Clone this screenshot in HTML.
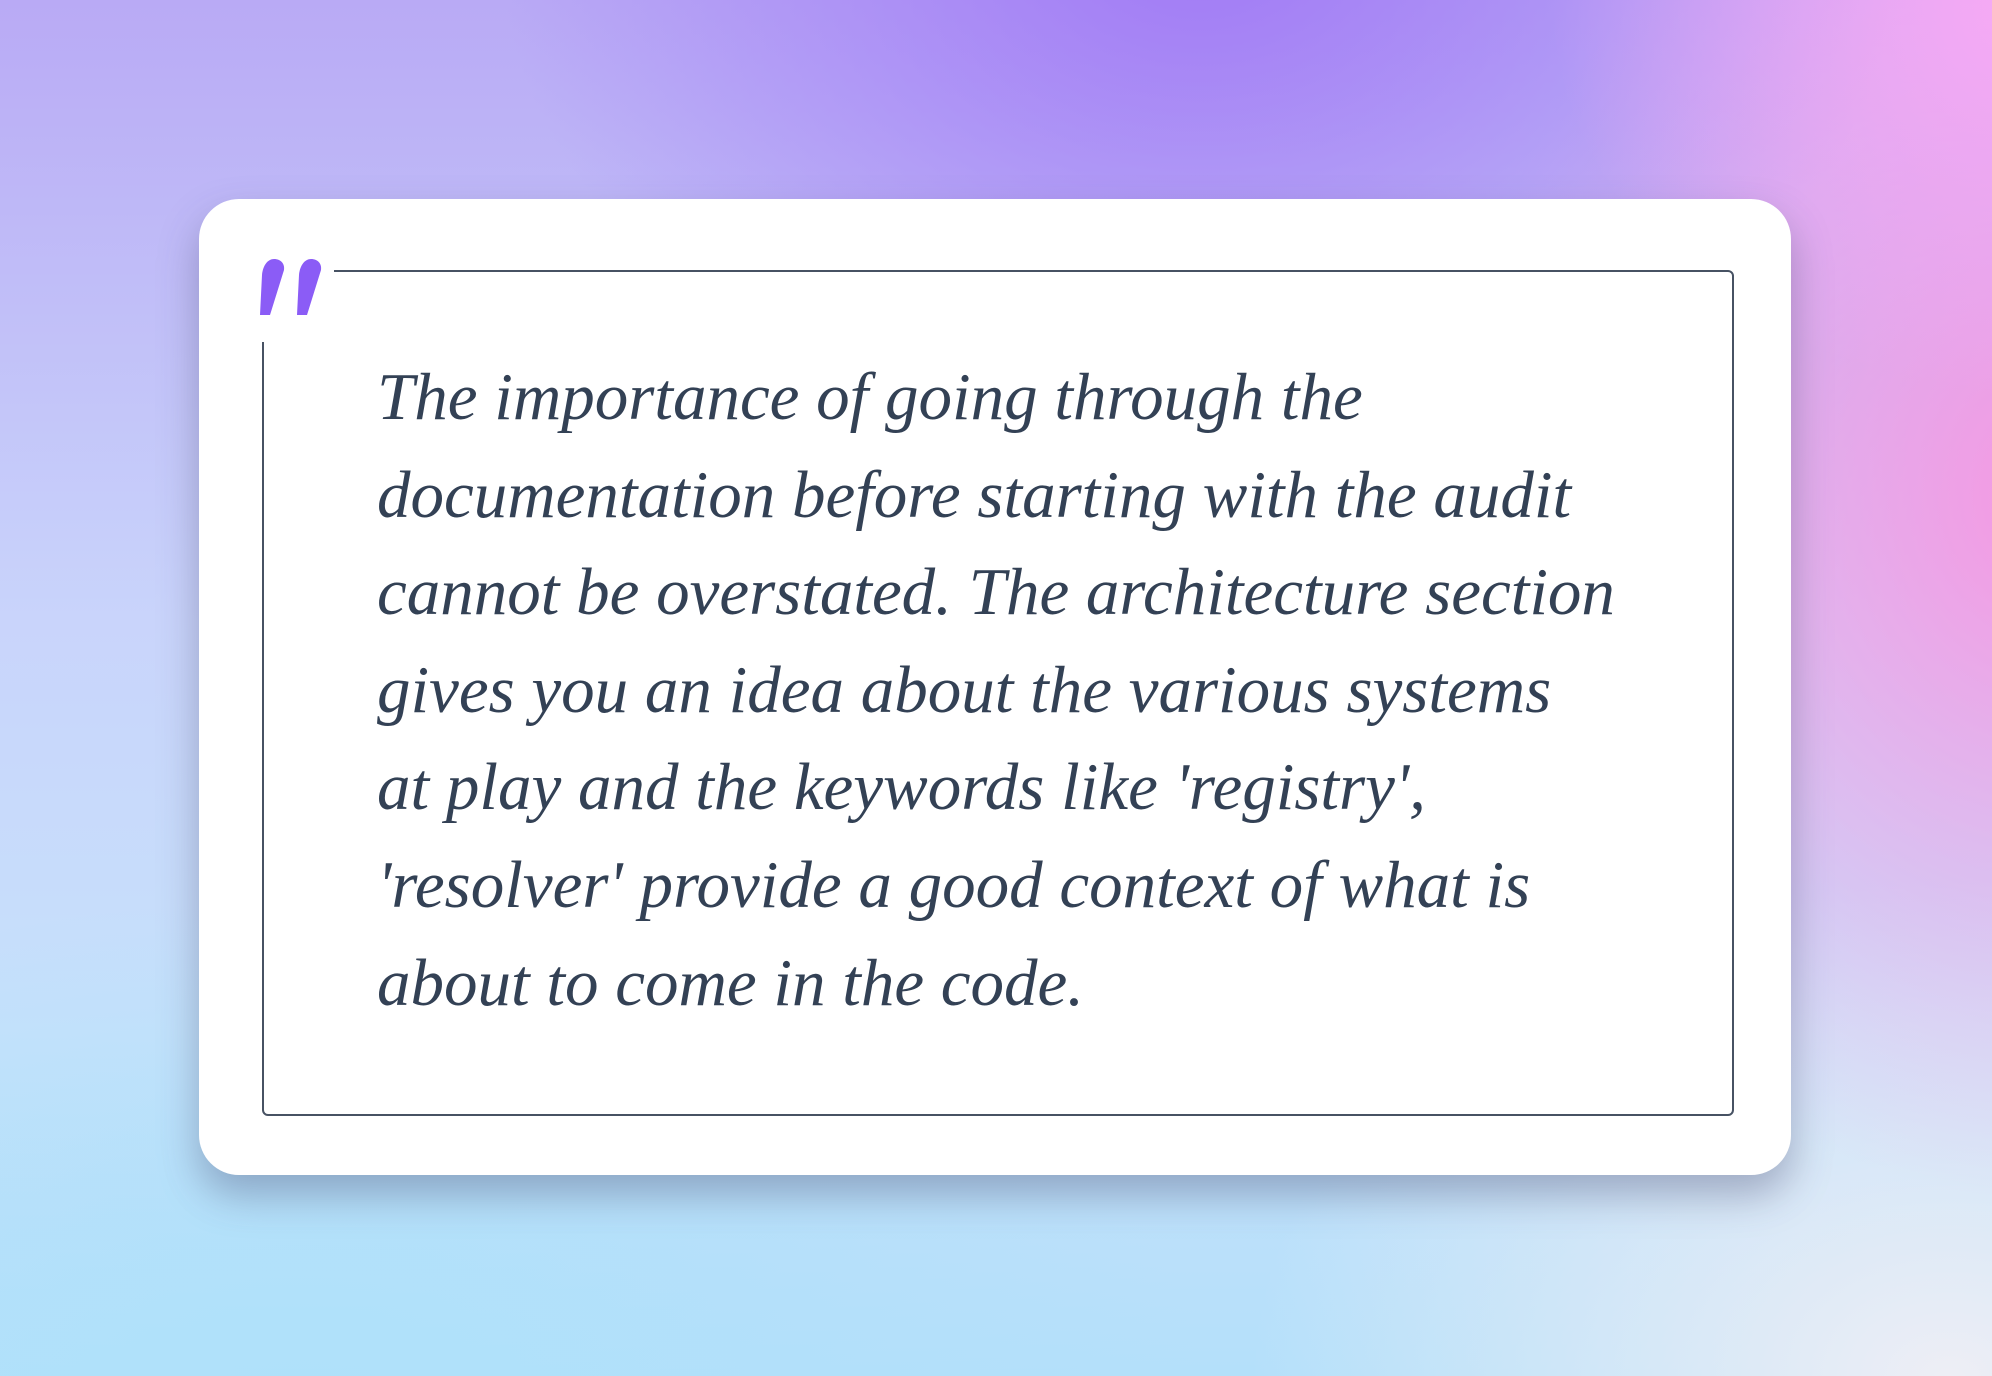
<!DOCTYPE html>
<html><head><meta charset="utf-8"><style>
html,body{margin:0;padding:0}
body{width:1992px;height:1376px;overflow:hidden;position:relative;
background:
radial-gradient(ellipse 500px 400px at 2050px 0px, rgba(250,170,245,1), rgba(250,170,245,0) 100%),
radial-gradient(ellipse 700px 500px at 1200px -50px, rgba(160,120,245,0.95), rgba(160,120,245,0) 100%),
radial-gradient(ellipse 600px 700px at 2050px 500px, rgba(248,150,225,0.95), rgba(248,150,225,0) 100%),
radial-gradient(ellipse 700px 500px at 1950px 1380px, rgba(238,238,245,1), rgba(238,238,245,0) 100%),
radial-gradient(ellipse 900px 500px at 300px 1400px, rgba(175,225,250,1), rgba(175,225,250,0) 100%),
linear-gradient(180deg,#b9aaf5 0%,#c9d4fb 45%,#c6e1fb 75%,#b4e0fa 100%);}
.card{position:absolute;left:199px;top:199px;width:1592px;height:976px;background:#fff;border-radius:40px;box-shadow:0 20px 40px rgba(60,60,100,0.35)}
.bx{position:absolute;left:262px;top:270px;width:1468px;height:842px;border:2px solid #475263;border-radius:6px}
.cv{position:absolute;left:255px;top:262px;width:79px;height:80px;background:#fff}
.q{position:absolute;left:258px;top:258px}
.txt{position:absolute;left:377px;top:349px;width:1340px;font-family:"Liberation Serif",serif;font-style:italic;font-size:67px;line-height:97.6px;color:#334155;white-space:nowrap}
</style></head><body>
<div class="card"></div>
<div class="bx"></div>
<div class="cv"></div>
<svg class="q" width="70" height="60" viewBox="0 0 70 60"><path fill="#8b5cf6" d="M16,1 C23,1 27,6 26,12 L12,57 L2,57 L4,17 C5,7 10,1 16,1 Z M53,1 C60,1 64,6 63,12 L49,57 L39,57 L41,17 C42,7 47,1 53,1 Z"/></svg>
<div class="txt">The importance of going through the<br>documentation before starting with the audit<br>cannot be overstated. The architecture section<br>gives you an idea about the various systems<br>at play and the keywords like 'registry',<br>'resolver' provide a good context of what is<br>about to come in the code.</div>
</body></html>
